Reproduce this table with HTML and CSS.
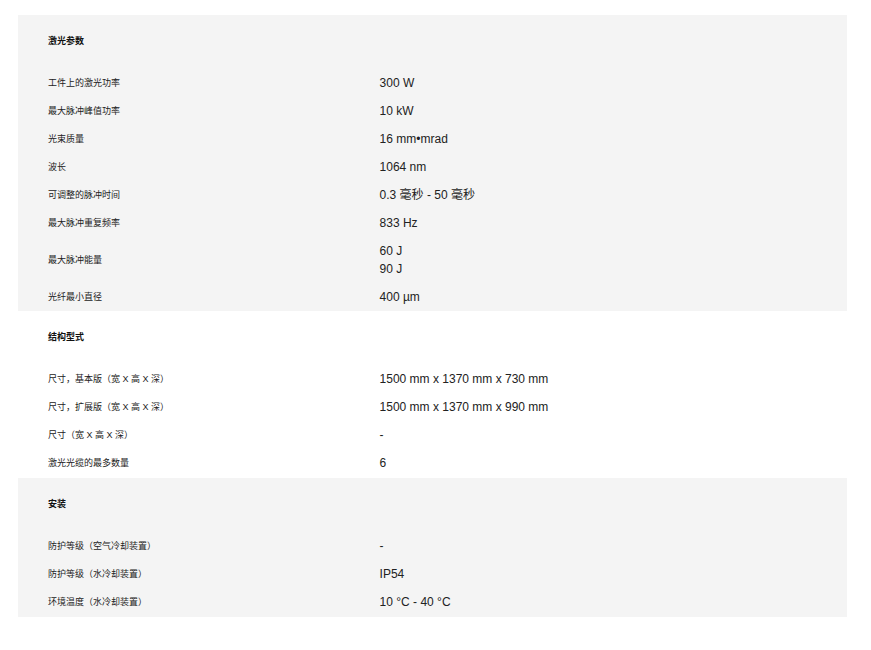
FILE: index.html
```html
<!DOCTYPE html>
<html lang="zh-CN">
<head>
<meta charset="utf-8">
<title>技术参数</title>
<link rel="stylesheet" href="styles.css">
</head>
<body>
<div class="specs">
  <section class="group shaded">
    <h3 class="group-title">激光参数</h3>
    <dl class="rows">
      <div class="row"><dt>工件上的激光功率</dt><dd>300 W</dd></div>
      <div class="row"><dt>最大脉冲峰值功率</dt><dd>10 kW</dd></div>
      <div class="row"><dt>光束质量</dt><dd>16 mm•mrad</dd></div>
      <div class="row"><dt>波长</dt><dd>1064 nm</dd></div>
      <div class="row"><dt>可调整的脉冲时间</dt><dd>0.3 毫秒 - 50 毫秒</dd></div>
      <div class="row"><dt>最大脉冲重复频率</dt><dd>833 Hz</dd></div>
      <div class="row"><dt>最大脉冲能量</dt><dd>60 J<br>90 J</dd></div>
      <div class="row"><dt>光纤最小直径</dt><dd>400 µm</dd></div>
    </dl>
  </section>
  <section class="group">
    <h3 class="group-title">结构型式</h3>
    <dl class="rows">
      <div class="row"><dt>尺寸，基本版（宽 X 高 X 深）</dt><dd>1500 mm x 1370 mm x 730 mm</dd></div>
      <div class="row"><dt>尺寸，扩展版（宽 X 高 X 深）</dt><dd>1500 mm x 1370 mm x 990 mm</dd></div>
      <div class="row"><dt>尺寸（宽 X 高 X 深）</dt><dd>-</dd></div>
      <div class="row"><dt>激光光缆的最多数量</dt><dd>6</dd></div>
    </dl>
  </section>
  <section class="group shaded">
    <h3 class="group-title">安装</h3>
    <dl class="rows">
      <div class="row"><dt>防护等级（空气冷却装置）</dt><dd>-</dd></div>
      <div class="row"><dt>防护等级（水冷却装置）</dt><dd>IP54</dd></div>
      <div class="row"><dt>环境温度（水冷却装置）</dt><dd>10 °C - 40 °C</dd></div>
    </dl>
  </section>
</div>
</body>
</html>
```

FILE: styles.css
```css
html, body {
  margin: 0;
  padding: 0;
  background: #ffffff;
}

body {
  color: #222222;
  font-family: "Liberation Sans", Arial, "Noto Sans CJK SC", sans-serif;
}

.specs {
  padding: 15px 24px 0 18px;
}

.group {
  background: #ffffff;
  padding-bottom: 1px;
}

.group:first-child {
  padding-bottom: 0;
}

.group.shaded {
  background: #f4f4f4;
}

.group-title {
  margin: 0;
  padding: 19px 30px 21px 30px;
  font-family: "Liberation Sans", Arial, "Noto Sans CJK SC", sans-serif;
  font-size: 9px;
  line-height: 14px;
  font-weight: 700;
  color: #111111;
}

.rows {
  margin: 0;
  padding: 0;
}

.row {
  display: grid;
  grid-template-columns: 40% 60%;
  align-items: center;
}

.row dt {
  margin: 0;
  padding: 0 30px;
  font-family: "Liberation Sans", Arial, "Noto Sans CJK SC", sans-serif;
  font-size: 9px;
  line-height: 14px;
  color: #222222;
}

.row dd {
  margin: 0;
  padding: 5px 30px;
  font-family: "Liberation Sans", Arial, "Noto Sans CJK SC", sans-serif;
  font-size: 12px;
  line-height: 18px;
  color: #222222;
}
```
